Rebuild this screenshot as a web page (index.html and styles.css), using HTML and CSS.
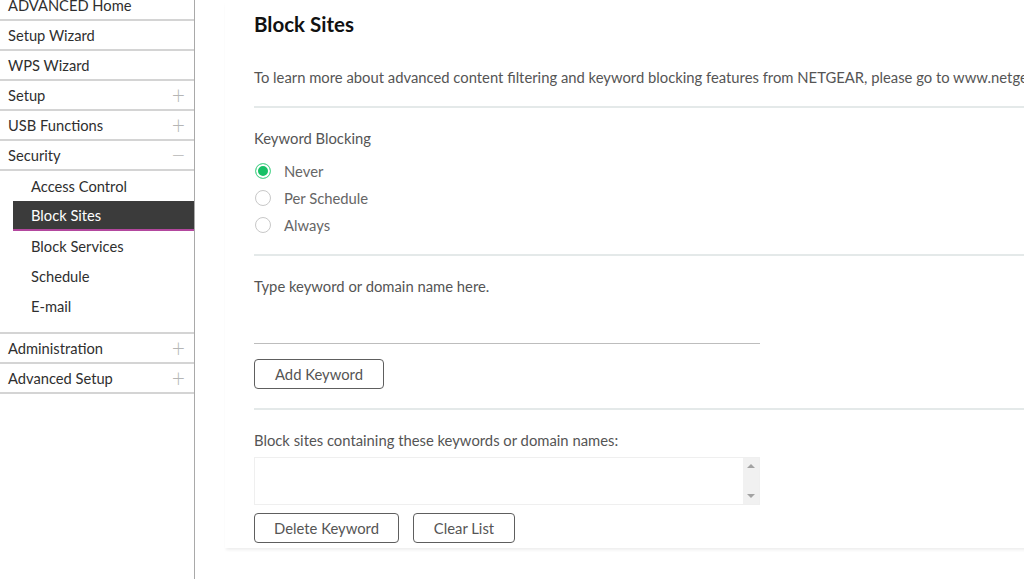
FILE: index.html
```html
<!DOCTYPE html>
<html lang="en">
<head>
<meta charset="utf-8">
<title>Block Sites</title>
<link rel="stylesheet" href="styles.css">
</head>
<body>
<div class="page">
  <nav class="sidebar">
    <ul class="menu">
      <li class="item">ADVANCED Home</li>
      <li class="item">Setup Wizard</li>
      <li class="item">WPS Wizard</li>
      <li class="item">Setup <span class="sign">+</span></li>
      <li class="item">USB Functions <span class="sign">+</span></li>
      <li class="item">Security <span class="sign minus">&minus;</span></li>
      <li class="group">
        <ul class="submenu">
          <li class="sub">Access Control</li>
          <li class="sub active">Block Sites</li>
          <li class="sub">Block Services</li>
          <li class="sub">Schedule</li>
          <li class="sub">E-mail</li>
        </ul>
      </li>
      <li class="item">Administration <span class="sign">+</span></li>
      <li class="item">Advanced Setup <span class="sign">+</span></li>
    </ul>
  </nav>
  <main class="main">
    <section class="card">
      <h1 class="title">Block Sites</h1>
      <p class="desc">To learn more about advanced content filtering and keyword blocking features from NETGEAR, please go to www.netgear.com/lpc</p>
      <hr class="rule">
      <div class="label">Keyword Blocking</div>
      <div class="radios">
        <div class="radio-row"><span class="radio checked"></span><span class="radio-label">Never</span></div>
        <div class="radio-row"><span class="radio"></span><span class="radio-label">Per Schedule</span></div>
        <div class="radio-row"><span class="radio"></span><span class="radio-label">Always</span></div>
      </div>
      <hr class="rule rule2">
      <div class="label">Type keyword or domain name here.</div>
      <div class="input"></div>
      <button class="btn btn-add">Add Keyword</button>
      <hr class="rule rule3">
      <div class="label">Block sites containing these keywords or domain names:</div>
      <div class="list">
        <div class="list-body"></div>
        <div class="scroll"><span class="arrow up"></span><span class="arrow down"></span></div>
      </div>
      <div class="btn-row">
        <button class="btn btn-del">Delete Keyword</button>
        <button class="btn btn-clear">Clear List</button>
      </div>
    </section>
  </main>
</div>
</body>
</html>
```

FILE: styles.css
```css
html, body {
  margin: 0;
  padding: 0;
  background: #fff;
  overflow: hidden;
  height: 579px;
}
body {
  font-family: Lato, "Open Sans", "Liberation Sans", sans-serif;
  color: #333;
}
.page {
  display: flex;
  height: 579px;
}
.sidebar {
  width: 194px;
  flex: 0 0 194px;
  border-right: 1px solid #a9a9a9;
  height: 579px;
}
.menu, .submenu {
  list-style: none;
  margin: 0;
  padding: 0;
}
.menu {
  margin-top: -9px;
}
.item {
  height: 28px;
  line-height: 28px;
  border-bottom: 2px solid #d4d4d4;
  padding-left: 8px;
  padding-right: 7px;
  font-size: 14.7px;
  color: #2f2f2f;
  display: flex;
  justify-content: space-between;
  align-items: center;
}
.sign {
  color: #b5b5b5;
  font-size: 20px;
  font-weight: 300;
  font-family: "DejaVu Sans", sans-serif;
  line-height: 20px;
  transform: scaleX(0.85);
}
.group {
  border-bottom: 2px solid #d4d4d4;
  padding-bottom: 11px;
}
.sub {
  height: 30px;
  line-height: 30px;
  margin-left: 13px;
  padding-left: 18px;
  font-size: 14.7px;
  color: #2f2f2f;
}
.sub.active {
  background: #3b3b3b;
  color: #fff;
  height: 28px;
  line-height: 29px;
  border-bottom: 2px solid #b3479e;
}
.main {
  flex: 1;
  padding-left: 30px;
  min-width: 0;
}
.card {
  width: 1100px;
  padding-left: 29px;
  padding-top: 10px;
  padding-bottom: 5px;
  box-shadow: 0 3px 3px -1px rgba(0, 0, 0, 0.07);
}
.title {
  margin: 0;
  font-size: 20.5px;
  line-height: 28px;
  font-weight: 700;
  color: #111;
}
.desc {
  margin: 29px 0 0;
  font-size: 14.8px;
  line-height: 20px;
  color: #555;
  white-space: nowrap;
}
.rule {
  margin: 19px 0 0;
  border: 0;
  height: 2px;
  background: #e4e9e9;
}
.label {
  margin-top: 20px;
  font-size: 14.8px;
  line-height: 20px;
  color: #555;
}
.radios {
  margin-top: 9px;
  display: flex;
  flex-direction: column;
}
.radio-row {
  height: 27px;
  display: flex;
  align-items: center;
}
.radio {
  box-sizing: border-box;
  width: 16px;
  height: 16px;
  border-radius: 50%;
  border: 1px solid #c8c8c8;
  margin-left: 1px;
  margin-right: 13px;
  background: #fff;
}
.radio.checked {
  border: 1.5px solid #5fd896;
  background: #16c166;
  box-shadow: inset 0 0 0 2px #fff;
}
.radio-label {
  font-size: 14.8px;
  color: #666;
}
.rule2 {
  margin-top: 16px;
}
.input {
  width: 506px;
  height: 47px;
  border-bottom: 1px solid #bdbdbd;
}
.btn {
  display: inline-block;
  box-sizing: border-box;
  height: 30px;
  border: 1px solid #5e5e5e;
  border-radius: 4px;
  background: #fff;
  font-family: Lato, "Open Sans", "Liberation Sans", sans-serif;
  font-size: 14.8px;
  color: #555;
  padding: 0;
  margin: 0;
}
.btn-add {
  margin-top: 15px;
  width: 130px;
  display: block;
}
.rule3 {
  margin-top: 19px;
}
.list {
  margin-top: 7px;
  width: 506px;
  height: 48px;
  box-sizing: border-box;
  border: 1px solid #efefef;
  display: flex;
}
.list-body {
  flex: 1;
}
.scroll {
  width: 16px;
  background: #f1f1f1;
  display: flex;
  flex-direction: column;
  justify-content: space-between;
  align-items: center;
  padding: 6px 0;
}
.arrow {
  width: 0;
  height: 0;
  border-left: 4px solid transparent;
  border-right: 4px solid transparent;
}
.arrow.up {
  border-bottom: 4px solid #a3a3a3;
}
.arrow.down {
  border-top: 4px solid #a3a3a3;
}
.btn-row {
  margin-top: 8px;
  display: flex;
  gap: 14px;
}
.btn-del {
  width: 145px;
}
.btn-clear {
  width: 102px;
}
```
